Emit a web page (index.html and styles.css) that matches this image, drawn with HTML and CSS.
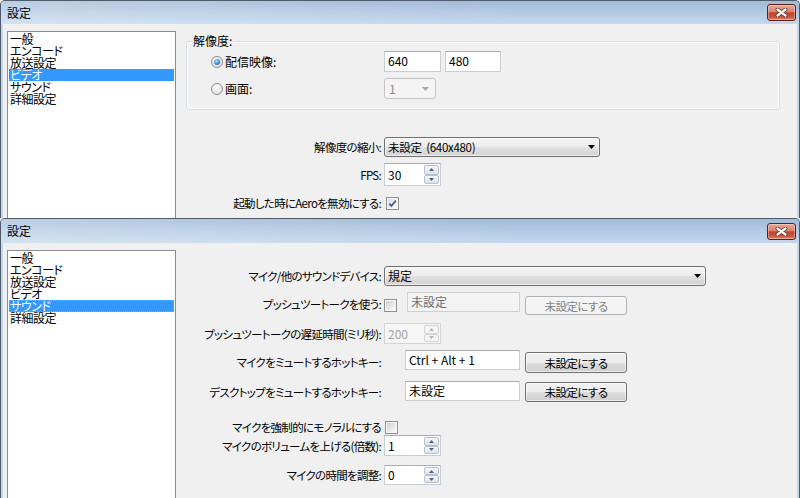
FILE: index.html
```html
<!DOCTYPE html>
<html lang="ja">
<head>
<meta charset="utf-8">
<title>設定</title>
<link rel="stylesheet" href="styles.css">
</head>
<body>
<div class="window win-top">
  <div class="titlebar">
    <span class="title">設定</span>
    <span class="close"><svg width="13" height="9" viewBox="0 0 13 9"><path d="M2.5 1.5L10.5 7.5M10.5 1.5L2.5 7.5" stroke="#5e2a22" stroke-width="3.8" stroke-linecap="round"/><path d="M2.5 1.5L10.5 7.5M10.5 1.5L2.5 7.5" stroke="#fff" stroke-width="2.2" stroke-linecap="round"/></svg></span>
  </div>
  <div class="client">
    <ul class="list">
      <li>一般</li>
      <li>エンコード</li>
      <li>放送設定</li>
      <li class="sel">ビデオ</li>
      <li>サウンド</li>
      <li>詳細設定</li>
    </ul>
    <div class="panel panel-video">
      <fieldset class="group">
        <legend>解像度:</legend>
        <div class="grow g-first">
          <span class="opt"><span class="radio on"></span>配信映像:</span>
          <span class="textbox">640</span>
          <span class="textbox">480</span>
        </div>
        <div class="grow">
          <span class="opt"><span class="radio"></span>画面:</span>
          <span class="combo combo-mon disabled"><span class="combo-text">1</span><svg class="arrow" width="7" height="4" viewBox="0 0 7 4"><path d="M0 0H7L3.5 4Z"/></svg></span>
        </div>
      </fieldset>
      <div class="row row-scale">
        <span class="lbl">解像度の縮小:</span>
        <span class="combo combo-scale"><span class="combo-text">未設定&nbsp; (640x480)</span><svg class="arrow" width="7" height="4" viewBox="0 0 7 4"><path d="M0 0H7L3.5 4Z"/></svg></span>
      </div>
      <div class="row row-fps">
        <span class="lbl">FPS:</span>
        <span class="spin"><span class="spin-val">30</span><span class="spin-btns"><span class="sb"><svg width="5" height="3" viewBox="0 0 5 3"><path d="M2.5 0L5 3H0Z"/></svg></span><span class="sb"><svg width="5" height="3" viewBox="0 0 5 3"><path d="M0 0H5L2.5 3Z"/></svg></span></span></span>
      </div>
      <div class="row row-aero">
        <span class="lbl">起動した時にAeroを無効にする:</span>
        <span class="check on shift2"><svg width="11" height="11" viewBox="0 0 11 11"><path d="M2.2 5.6L4.4 7.9L8.9 2.6" fill="none" stroke="#4a5e99" stroke-width="1.8"/></svg></span>
      </div>
    </div>
  </div>
</div>

<div class="window win-bottom">
  <div class="titlebar">
    <span class="title">設定</span>
    <span class="close"><svg width="13" height="9" viewBox="0 0 13 9"><path d="M2.5 1.5L10.5 7.5M10.5 1.5L2.5 7.5" stroke="#5e2a22" stroke-width="3.8" stroke-linecap="round"/><path d="M2.5 1.5L10.5 7.5M10.5 1.5L2.5 7.5" stroke="#fff" stroke-width="2.2" stroke-linecap="round"/></svg></span>
  </div>
  <div class="client">
    <ul class="list">
      <li>一般</li>
      <li>エンコード</li>
      <li>放送設定</li>
      <li>ビデオ</li>
      <li class="sel focus">サウンド</li>
      <li>詳細設定</li>
    </ul>
    <div class="panel panel-sound">
      <div class="row row-dev">
        <span class="lbl">マイク/他のサウンドデバイス:</span>
        <span class="combo combo-dev"><span class="combo-text">規定</span><svg class="arrow" width="7" height="4" viewBox="0 0 7 4"><path d="M0 0H7L3.5 4Z"/></svg></span>
      </div>
      <div class="row row-push">
        <span class="lbl">プッシュツートークを使う:</span>
        <span class="ctrls">
          <span class="check c-push"></span>
          <span class="textbox tb-push disabled">未設定</span>
          <span class="btn b-push disabled">未設定にする</span>
        </span>
      </div>
      <div class="row row-delay">
        <span class="lbl">プッシュツートークの遅延時間(ミリ秒):</span>
        <span class="spin disabled"><span class="spin-val">200</span><span class="spin-btns"><span class="sb"><svg width="5" height="3" viewBox="0 0 5 3"><path d="M2.5 0L5 3H0Z"/></svg></span><span class="sb"><svg width="5" height="3" viewBox="0 0 5 3"><path d="M0 0H5L2.5 3Z"/></svg></span></span></span>
      </div>
      <div class="row row-mute">
        <span class="lbl">マイクをミュートするホットキー:</span>
        <span class="ctrls">
          <span class="textbox tb-key">Ctrl + Alt + 1</span>
          <span class="btn b-mute">未設定にする</span>
        </span>
      </div>
      <div class="row row-desk">
        <span class="lbl">デスクトップをミュートするホットキー:</span>
        <span class="ctrls">
          <span class="textbox tb-key">未設定</span>
          <span class="btn b-desk">未設定にする</span>
        </span>
      </div>
      <div class="row row-mono">
        <span class="lbl">マイクを強制的にモノラルにする</span>
        <span class="check shift1"></span>
      </div>
      <div class="row row-vol">
        <span class="lbl">マイクのボリュームを上げる(倍数):</span>
        <span class="spin"><span class="spin-val">1</span><span class="spin-btns"><span class="sb"><svg width="5" height="3" viewBox="0 0 5 3"><path d="M2.5 0L5 3H0Z"/></svg></span><span class="sb"><svg width="5" height="3" viewBox="0 0 5 3"><path d="M0 0H5L2.5 3Z"/></svg></span></span></span>
      </div>
      <div class="row row-time">
        <span class="lbl">マイクの時間を調整:</span>
        <span class="spin"><span class="spin-val">0</span><span class="spin-btns"><span class="sb"><svg width="5" height="3" viewBox="0 0 5 3"><path d="M2.5 0L5 3H0Z"/></svg></span><span class="sb"><svg width="5" height="3" viewBox="0 0 5 3"><path d="M0 0H5L2.5 3Z"/></svg></span></span></span>
      </div>
    </div>
  </div>
</div>
</body>
</html>
```
FILE: styles.css
```css
* { box-sizing: border-box; }
html, body { margin: 0; padding: 0; }
body {
  width: 800px;
  height: 498px;
  overflow: hidden;
  background: #f0f0f0;
  font-family: "Noto Sans CJK JP", "Noto Sans", sans-serif;
  font-size: 12px;
  line-height: 14px;
  color: #000;
  font-feature-settings: "palt" 1;
}

/* window frame */
.window {
  display: flex;
  flex-direction: column;
  border: 1px solid #4e5b69;
  border-bottom: 0;
  border-radius: 5px 5px 0 0;
  background: #c3d7ed;
  padding: 0 2px;
  overflow: hidden;
}
.win-top { height: 218px; }
.win-bottom { height: 280px; }

.titlebar {
  flex: none;
  height: 23px;
  margin: 0 -2px;
  display: flex;
  align-items: center;
  padding: 0 3px 0 6px;
  background:
    linear-gradient(to right, rgba(255,255,255,0.28), rgba(255,255,255,0) 65%),
    linear-gradient(to bottom, #a1bad6, #b6cce5 55%, #c3d8ee);
}
.win-bottom .titlebar { height: 24px; }
.title { font-size: 12px; line-height: 14px; }
.close {
  margin-left: auto;
  width: 29px;
  height: 17px;
  border: 1px solid #5b2119;
  border-radius: 3px;
  background: linear-gradient(to bottom, #e8a797 0%, #d88470 45%, #c3432c 52%, #c9553c 80%, #df8a6e 100%);
  box-shadow: inset 0 0 0 1px rgba(255,255,255,0.35);
  display: flex;
  align-items: center;
  justify-content: center;
}

.client {
  flex: 1;
  min-height: 0;
  display: flex;
  align-items: flex-start;
  background: #f0f0f0;
  padding-left: 4px;
}

/* list box */
.list {
  flex: none;
  width: 169px;
  height: 400px;
  margin: 7px 0 0 0;
  padding: 1px;
  list-style: none;
  background: #fff;
  border: 1px solid #8a8d93;
}
.list li {
  height: 12px;
  line-height: 12px;
  padding-left: 1px;
  white-space: nowrap;
  letter-spacing: -0.5px;
}
.list li.sel { background: #3399ff; color: #fff; }
.list li.focus { outline: 1px dotted #c9a25a; outline-offset: -1px; }

/* right panel */
.panel { flex: 1; min-width: 0; }
.panel-video { padding-top: 10px; }
.panel-sound { padding-top: 23px; }

.group {
  margin: 0 17px 0 10px;
  padding: 0 0 10px 0;
  border: 1px solid #d5dfe5;
  border-radius: 3px;
  box-shadow: inset 0 0 0 1px #fbfbfb;
  min-width: 0;
}
.group legend {
  margin-left: 5px;
  padding: 0 1px;
  line-height: 14px;
}
.grow {
  display: grid;
  grid-template-columns: 169px 57px 56px;
  column-gap: 4px;
  align-items: center;
  height: 21px;
  margin-top: 6px;
  padding-left: 24px;
}
.grow.g-first { margin-top: 3px; }
.grow .textbox { height: 21px; }
.opt { display: flex; align-items: center; gap: 2px; white-space: nowrap; }

.row {
  display: grid;
  grid-template-columns: 205px auto;
  column-gap: 3px;
  justify-content: start;
  align-items: center;
}
.lbl {
  text-align: right;
  white-space: nowrap;
  line-height: 14px;
  font-size: 11.5px;
  letter-spacing: -0.7px;
}

.row-scale { margin-top: 27px; height: 20px; }
.row-fps { margin-top: 6px; height: 23px; }
.row-aero { margin-top: 10px; height: 13px; }

.row-dev { height: 20px; }
.row-push { margin-top: 6px; height: 23px; }
.row-delay { margin-top: 8px; height: 21px; }
.row-mute { margin-top: 6px; height: 23px; }
.row-desk { margin-top: 8px; height: 21px; }
.row-mono { margin-top: 18px; height: 13px; }
.row-vol { margin-top: 2px; height: 21px; }
.row-time { margin-top: 9px; height: 20px; }

.ctrls { display: flex; align-items: flex-start; height: 100%; }

/* text box */
.textbox {
  display: block;
  height: 20px;
  border: 1px solid #c9cdd4;
  border-top-color: #abadb3;
  background: #fff;
  padding: 0 3px;
  line-height: 18px;
  white-space: nowrap;
  overflow: hidden;
}
.textbox.disabled { background: #f3f3f3; color: #6d6d6d; border-color: #d0d0d0; }
.tb-push { width: 113px; margin-left: 10px; }
.tb-key { width: 115px; margin-left: 21px; }

/* combo box */
.combo {
  display: flex;
  align-items: center;
  justify-content: space-between;
  height: 100%;
  border: 1px solid #707070;
  border-radius: 3px;
  background: linear-gradient(to bottom, #f4f4f4, #ececec 50%, #e0e0e0 51%, #d3d3d3);
  box-shadow: inset 0 0 0 1px rgba(255,255,255,0.6);
  padding: 0 4px 0 3px;
  white-space: nowrap;
}
.combo-text { white-space: pre; }
.combo-scale { width: 216px; }
.combo-scale .combo-text { font-size: 11.5px; letter-spacing: -0.3px; }
.combo-dev { width: 322px; }
.combo-mon { width: 52px; height: 21px; padding: 0 6px 0 4px; }
.arrow path { fill: #000; }
.combo.disabled {
  border-color: #c3c3c3;
  background: #f4f4f4;
  box-shadow: none;
  color: #8d8d8d;
}
.combo.disabled .arrow path { fill: #a8a8a8; }

/* spinner */
.spin {
  display: flex;
  width: 57px;
  height: 100%;
  border: 1px solid #c9cdd4;
  border-top-color: #abadb3;
  background: #fff;
}
.spin-val { flex: 1; padding-left: 3px; display: flex; align-items: center; }
.spin-btns { width: 16px; display: flex; flex-direction: column; padding: 1px 1px 1px 0; }
.sb {
  flex: 1;
  border: 1px solid #b7c1cd;
  border-radius: 2px;
  background: linear-gradient(to bottom, #f6f8fa, #dde4ec);
  display: flex;
  align-items: center;
  justify-content: center;
}
.sb path { fill: #4d6185; }
.spin.disabled { background: #f6f6f6; color: #a3a3a3; border-color: #d5d5d5; }
.spin.disabled .sb { border-color: #d5d5d5; background: #f4f4f4; }
.spin.disabled .sb path { fill: #b5b5b5; }

/* check box */
.check {
  width: 13px;
  height: 13px;
  border: 1px solid #8e8f8f;
  background: linear-gradient(135deg, #c9ced5, #f4f4f4 80%);
  box-shadow: inset 0 0 0 1px #fafafa;
  display: flex;
  align-items: center;
  justify-content: center;
}
.check.on { background: linear-gradient(135deg, #d4d8de, #fbfbfb 80%); }
.check.shift2 { margin-left: 2px; }
.check.shift1 { margin-left: 1px; }
.c-push { margin-top: 7px; }

/* radio */
.radio {
  width: 12px;
  height: 12px;
  border-radius: 50%;
  border: 1px solid #8e8f8f;
  background: radial-gradient(circle at 40% 35%, #ffffff, #d6d6d6);
  display: flex;
  align-items: center;
  justify-content: center;
}
.radio.on::after {
  content: "";
  width: 6px;
  height: 6px;
  border-radius: 50%;
  background: radial-gradient(circle at 40% 35%, #bde7ff, #3b8fd8 50%, #0f4f96);
}

/* buttons */
.btn {
  display: flex;
  align-items: center;
  justify-content: center;
  width: 102px;
  margin-left: 5px;
  border: 1px solid #707070;
  border-radius: 3px;
  background: linear-gradient(to bottom, #f2f2f2, #ebebeb 50%, #dddddd 51%, #cfcfcf);
  box-shadow: inset 0 0 0 1px rgba(255,255,255,0.6);
  white-space: nowrap;
  font-size: 11.5px;
  letter-spacing: -0.6px;
}
.btn.disabled { border-color: #adb2b5; background: #f4f4f4; color: #838383; box-shadow: none; }
.b-push { margin-top: 4px; height: 19px; }
.b-mute { margin-top: 2px; height: 21px; }
.b-desk { margin-top: 1px; height: 20px; }
```
